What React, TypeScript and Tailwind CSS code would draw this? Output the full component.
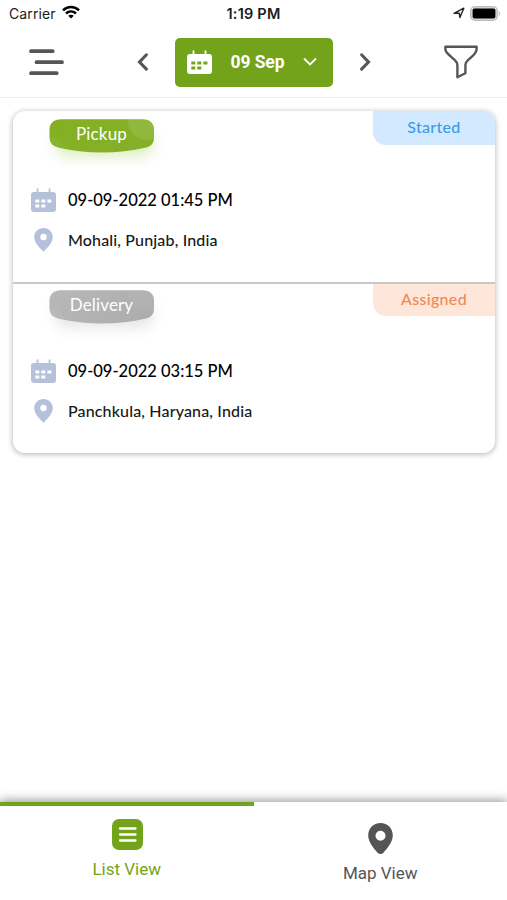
import React from "react";

function CalendarIcon({ body, cell }: { body: string; cell: string }) {
  return (
    <svg width="25" height="24" viewBox="0 0 25 24" className="shrink-0">
      <path d="M6.500 1.200v4M18.500 1.200v4" stroke={body} strokeWidth="1.800" strokeLinecap="round" />
      <rect x="0" y="4" width="25" height="20" rx="3" fill={body} />
      <path
        d="M4.300 11.400h4v3h-4zM10.300 11.400h4v3h-4zM16.400 11.400h4v3h-4zM4.300 16.600h4v3h-4zM10.300 16.600h4v3h-4z"
        fill={cell}
      />
    </svg>
  );
}

function StatusBar() {
  return (
    <div className="grid h-7 grid-cols-3 items-center pr-[6px] pl-[9px] font-[Inter,sans-serif] text-[14px] text-[#1c1c1c]">
      <div className="-mt-px flex items-center gap-[6px]">
        <span className="tracking-[0.1px]">Carrier</span>
        <svg width="18" height="14" viewBox="0 0 18 14" fill="none" stroke="#000" strokeWidth="2.5" className="-mt-[3px]">
          <path d="M1 5.3C5.6 .8 12.4 .8 17 5.3M4 8.5c2.9-2.8 7.1-2.8 10 0" />
          <path d="M6.2 10.8c1.6-1.5 4-1.5 5.6 0L9 13.6z" fill="#000" stroke="none" />
        </svg>
      </div>
      <div className="-ml-[3px] text-center text-[14.5px] font-semibold tracking-[0.2px] whitespace-nowrap">1:19 PM</div>
      <div className="-mt-[2px] flex items-center justify-end gap-[5px]">
        <svg width="12" height="12" viewBox="0 0 12 12" fill="none" stroke="#222" strokeWidth="1.400" strokeLinejoin="round">
          <path d="M1 6.300 10.800 1.200 6.900 10.600 6.300 6.300z" />
        </svg>
        <svg width="31" height="15" viewBox="0 0 31 15">
          <rect x=".7" y=".7" width="26.600" height="13.600" rx="4" fill="#d8d8d8" stroke="#bdbdbd" strokeWidth="1.300" />
          <rect x="2.600" y="2.600" width="22.800" height="9.800" rx="2" fill="#000" />
          <path d="M28.800 5v5c1.600-.7 1.600-4.300 0-5" fill="#b5b5b5" />
        </svg>
      </div>
    </div>
  );
}

function Header() {
  return (
    <header className="flex h-[70px] items-start border-b border-[#ececec] pt-[10px] pl-[28.5px]">
      <svg width="35" height="48" viewBox="0 0 35 48" stroke="#565656" strokeWidth="3.8" strokeLinecap="round">
        <path d="M2 13.2h21.7M7.5 24.2h25.5M2 35.2h25.7" />
      </svg>
      <svg width="14" height="48" viewBox="0 0 14 48" fill="none" stroke="#565656" strokeWidth="3.1" strokeLinecap="round" className="ml-[72px]">
        <path d="M10.400 16.800 3.500 24l6.900 7.100" />
      </svg>
      <button className="ml-[25px] flex h-[48.5px] w-[158.5px] items-center rounded-[5px] bg-[#72a31b] pl-[12px] text-white">
        <CalendarIcon body="#fff" cell="#72a31b" />
        <span className="ml-[19px] w-[72px] text-left font-[Roboto,sans-serif] text-[17.5px] font-bold tracking-[-0.1px]">09 Sep</span>
        <svg width="14" height="10" viewBox="0 0 14 10" fill="none" stroke="#fff" strokeWidth="1.8" strokeLinecap="round">
          <path d="M1.500 2 7 7.400 12.500 2" />
        </svg>
      </button>
      <svg width="14" height="48" viewBox="0 0 14 48" fill="none" stroke="#565656" strokeWidth="3.1" strokeLinecap="round" className="ml-[25px]">
        <path d="m3.600 16.800 6.900 7.200-6.900 7.100" />
      </svg>
      <svg width="34" height="48" viewBox="0 0 34 48" fill="none" stroke="#565656" strokeWidth="2.4" strokeLinejoin="round" className="ml-[72px]">
        <path d="M1.400 8.800h31.200v2.200c0 3.200-1.400 4.600-4.400 7.300l-4 3.600c-2 1.800-2.800 3-2.800 5.100v8.300l-8 4V27c0-2.100-.8-3.300-2.800-5.100l-4-3.600c-3-2.700-5.200-4.100-5.200-7.300z" />
      </svg>
    </header>
  );
}

type StopProps = {
  kind: "Pickup" | "Delivery";
  status: string;
  statusClass: string;
  time: string;
  place: string;
};

function Stop({ kind, status, statusClass, time, place }: StopProps) {
  const pickup = kind === "Pickup";
  return (
    <section className="flex h-[171px] flex-col">
      <div className="flex h-[77px] items-start justify-between">
        <div className="relative ml-[19.5px] h-[70px] w-[144px]">
          <svg width="144" height="70" viewBox="0 0 144 70" className="absolute inset-0">
            <defs>
              <linearGradient id={kind} x1="0" y1="0" x2="1" y2="0.3">
                <stop offset="0" stopColor={pickup ? "#83b022" : "#bababa"} />
                <stop offset="1" stopColor={pickup ? "#83b028" : "#acacac"} />
              </linearGradient>
              <clipPath id={kind + "-clip"}>
                <path d="M28 8.300h82c6.500 0 11 4 11 10v7.500c0 7-3 9.500-9 11-26 6.300-60 6.300-86 0-6-1.500-9.500-4.500-9.500-11v-7.500c0-6 4.500-10 11.500-10z" />
              </clipPath>
              <filter id={kind + "-glow"} x="-30%" y="-50%" width="160%" height="240%">
                <feGaussianBlur stdDeviation="7" />
              </filter>
            </defs>
            <rect x="22" y="20" width="98" height="25" rx="12" fill={pickup ? "#a9d060" : "#c0c0c0"} opacity=".42" filter={`url(#${kind}-glow)`} />
            <g clipPath={`url(#${kind}-clip)`}>
              <rect width="144" height="50" fill={`url(#${kind})`} />
              <circle cx="114" cy="10" r="19" fill="#fff" opacity={pickup ? 0.11 : 0.04} />
              <circle cx="18" cy="40" r="14" fill="#fff" opacity="0.05" />
            </g>
          </svg>
          <span className="relative ml-[17px] flex h-[46px] w-[104px] items-center justify-center text-[17px] tracking-[0.15px] text-white">{kind}</span>
        </div>
        <div className={`flex w-[122px] items-center justify-center rounded-bl-[13px] pb-[2px] text-[16px] font-medium tracking-[0.3px] ${statusClass}`}>{status}</div>
      </div>
      <div className="flex h-6 items-center gap-3 pl-[18px]">
        <CalendarIcon body="#b5c0da" cell="#fff" />
        <span className="text-[16.5px] leading-[22px] font-medium text-black">{time}</span>
      </div>
      <div className="mt-[15px] flex h-[26px] items-center pl-[21px]">
        <svg width="19" height="24" viewBox="0 0 19 24" className="shrink-0">
          <path fillRule="evenodd" d="M9.500 0C4.200 0 .2 4 .2 9.100c0 5.900 5.700 11 9.300 14.700 3.600-3.700 9.300-8.800 9.300-14.700C18.800 4 14.800 0 9.500 0zm0 5.800a3.200 3.200 0 1 1 0 6.400 3.200 3.200 0 0 1 0-6.400z" fill="#b5c0da" />
        </svg>
        <span className="ml-[15px] text-[16px] font-medium tracking-[0.15px] text-[#171717]">{place}</span>
      </div>
    </section>
  );
}

export default function App() {
  return (
    <div className="flex h-[900px] w-[507px] flex-col overflow-hidden bg-white font-[Lato,sans-serif]">
      <StatusBar />
      <Header />
      <main className="flex-1 pt-[13px] pr-[12px] pl-[13px]">
        <div className="h-[342px] overflow-clip rounded-[12px] bg-white shadow-[0_1px_5px_1px_rgba(0,0,0,0.24)]">
          <Stop kind="Pickup" status="Started" statusClass="h-[34px] bg-[#d2e9ff] text-[#3b9be6]" time="09-09-2022 01:45 PM" place="Mohali, Punjab, India" />
          <div className="border-t-2 border-[#c9c7c7]">
            <div className="-mt-[2px]">
              <Stop kind="Delivery" status="Assigned" statusClass="mt-[2px] h-[32px] bg-[#ffe6da] text-[#f08a52]" time="09-09-2022 03:15 PM" place="Panchkula, Haryana, India" />
            </div>
          </div>
        </div>
      </main>
      <nav className="grid h-[98px] grid-cols-2 bg-white font-[Roboto,sans-serif] text-[17px] shadow-[0_0_10px_1px_rgba(0,0,0,0.45)]">
        <div className="flex flex-col items-center border-t-4 border-[#72a31b] pt-[13px] text-[#72a31b]">
          <svg width="31" height="31" viewBox="0 0 31 31" className="ml-px">
            <rect width="31" height="31" rx="7" fill="#72a31b" />
            <path d="M8 9.500h15.500M8 15.500h15.500M8 21.500h15.500" stroke="#fff" strokeWidth="2.3" strokeLinecap="round" />
          </svg>
          <span className="mt-[7px] leading-6">List View</span>
        </div>
        <div className="flex flex-col items-center pt-[21px] text-[#555]">
          <svg width="25" height="31" viewBox="0 0 25 31" className="ml-px">
            <path fillRule="evenodd" d="M12.500 0C5.500 0 .2 5.300 .2 12.300c0 6.700 5.200 12.700 9.300 17.400 1.700 1.700 4.300 1.700 6 0 4.100-4.700 9.300-10.700 9.300-17.400C24.800 5.300 19.500 0 12.500 0zm0 7.800a5 5 0 1 1 0 10 5 5 0 0 1 0-10z" fill="#555" />
          </svg>
          <span className="mt-[7px] leading-6">Map View</span>
        </div>
      </nav>
    </div>
  );
}
